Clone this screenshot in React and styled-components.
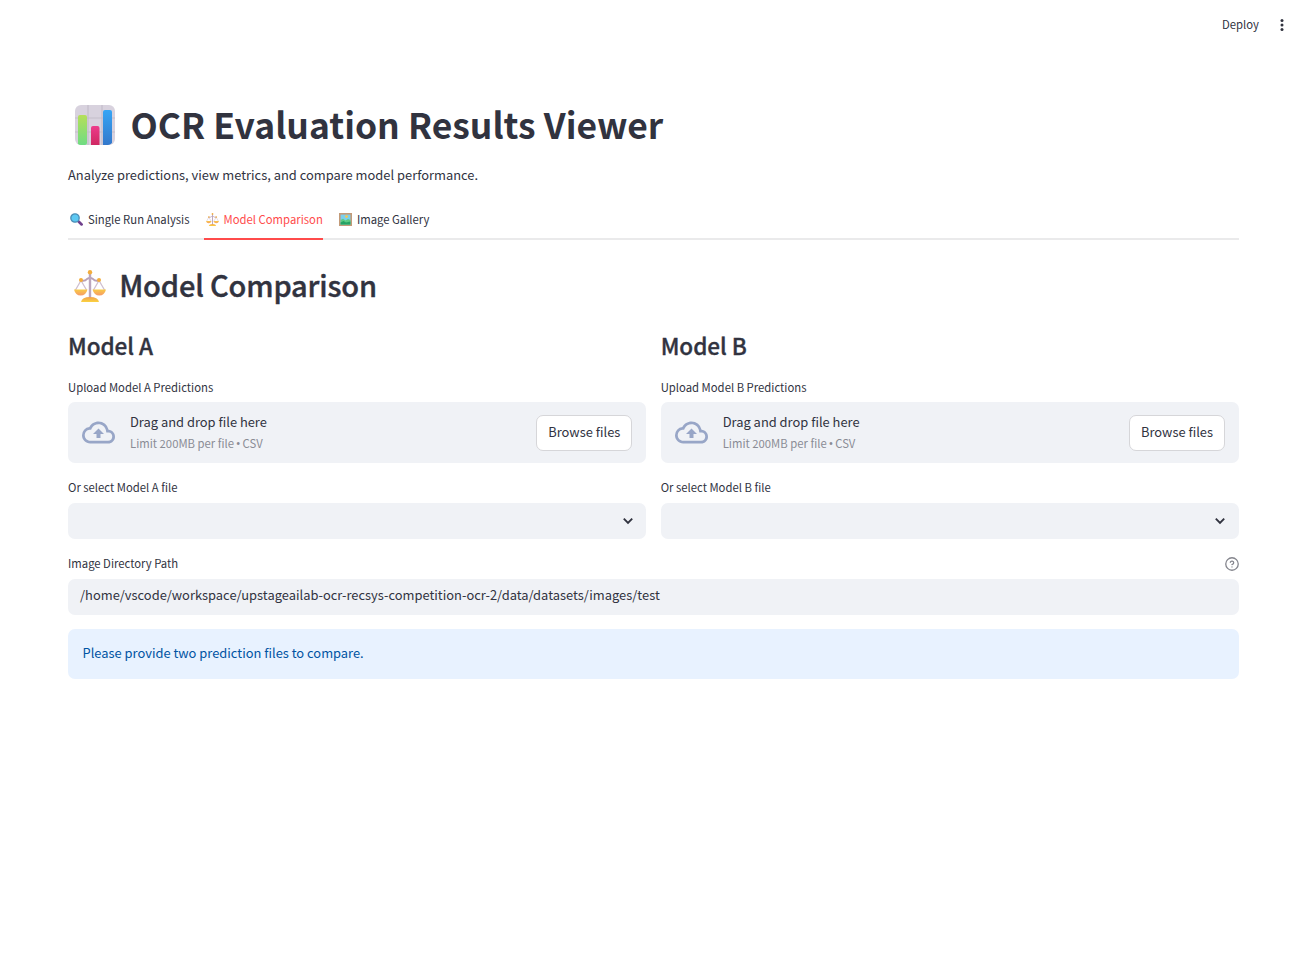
import React from "react";
import styled, { createGlobalStyle } from "styled-components";

const Global = createGlobalStyle`
  * { box-sizing: border-box; }
  body { margin: 0; background: #fff; }
  body, button, input { font-family: "Noto Sans CJK SC", "Noto Sans CJK JP", "Open Sans", sans-serif; color: #31333f; }
`;
const Header = styled.header`
  height: 54px; display: flex; justify-content: flex-end; align-items: center;
  padding: 0 20px 4px 0; gap: 16px;
`;
const PlainButton = styled.button`
  border: 0; background: none; padding: 0 0 ${p => p.$lift || 0}px; display: flex; font-size: 11.3px; line-height: 20px;
`;
const Main = styled.main`width: 1171px; margin: 45px 0 0 68px;`;
const Title = styled.h1`
  margin: 0; height: 52px; display: flex; align-items: center; gap: 15.4px; padding-left: 7px;
  font-size: 35.45px; font-weight: 700; line-height: 52px; white-space: nowrap;
  span { padding-bottom: 2px; letter-spacing: 0.015px; }
`;
const Intro = styled.p`margin: 13px 0 14px; font-size: 12.9px; line-height: 22px;`;
const Tabs = styled.nav`display: flex; gap: 14.6px; height: 40px; border-bottom: 2px solid #eaeaeb;`;
const Tab = styled.button`
  border: 0; border-bottom: 2px solid ${p => (p.$active ? "#ff4b4b" : "transparent")};
  background: none; height: 40px; padding: 0 0 0 2px; display: flex; align-items: center; gap: 4.5px;
  font-size: 11.3px; line-height: 20px; white-space: nowrap;
  && { color: ${p => (p.$active ? "#ff4b4b" : "#31333f")}; }
  svg { margin-top: 1px; }
`;
const Heading = styled.h2`
  margin: 26px 0 24px; height: 40px; padding-left: 6px; display: flex; align-items: center; gap: 13.2px;
  font-size: 29px; line-height: 40px; font-weight: 500; letter-spacing: -0.16px; -webkit-text-stroke: 0.4px #31333f;
  span { padding-bottom: 4px; }
`;
const Columns = styled.div`display: grid; grid-template-columns: 1fr 1fr; gap: 14.4px;`;
const Subheading = styled.h3`
  margin: 0 0 18px; font-size: 22.56px; line-height: 30px; font-weight: 500; letter-spacing: -0.06px;
  -webkit-text-stroke: 0.35px #31333f;
`;
const Label = styled.div`
  height: 20px; margin-bottom: ${p => p.$gap || 5}px; display: flex; justify-content: space-between;
  font-size: 11.3px; line-height: 18px;
  svg { margin-top: 3px; }
`;
const Dropzone = styled.div`
  height: 61px; margin-bottom: 15px; padding: 0 14px; border-radius: 7px; background: #f0f2f6;
  display: flex; align-items: center;
`;
const DropText = styled.div`flex: 1; margin-left: 15px; padding-bottom: 1px; font-size: 12.9px; line-height: 22px;`;
const Hint = styled.div`font-size: 11.3px; line-height: 20px; color: #8a8c95;`;
const Bullet = styled.span`font-family: "Open Sans", sans-serif; font-size: 13px; line-height: 0; margin: 0 -0.7px;`;
const Browse = styled.button`
  height: 36px; width: 96px; padding: 0 0 2px; border: 1px solid #d6d6d9; border-radius: 7px; background: #fff;
  font-size: 12.9px; line-height: 22px;
`;
const Select = styled.div`
  height: 36px; margin-bottom: 15px; padding-right: 11.7px; border-radius: 7px; background: #f0f2f6;
  display: flex; align-items: center; justify-content: flex-end;
`;
const PathInput = styled.div`
  height: 36px; padding: 0 12px; border-radius: 7px; background: #f0f2f6; font-size: 12.9px; line-height: 31px;
`;
const Notice = styled.div`
  height: 50px; margin-top: 14px; padding: 0 14.5px; border-radius: 7px; background: #e8f2ff; color: #0054a3;
  font-size: 12.9px; line-height: 47px;
`;

const ChartIcon = () => (
  <svg width="40" height="40" viewBox="0 0 40 40">
    <defs>
      <linearGradient id="cg" x2="0" y2="1"><stop stopColor="#b5df59" /><stop offset="1" stopColor="#6fdc83" /></linearGradient>
      <linearGradient id="cr" x2="0" y2="1"><stop stopColor="#ed3b8b" /><stop offset="1" stopColor="#cf2862" /></linearGradient>
      <linearGradient id="cb" x2="0" y2="1"><stop stopColor="#36a5f5" /><stop offset="1" stopColor="#3378cb" /></linearGradient>
    </defs>
    <rect width="40" height="40" rx="6" fill="#d8d2de" />
    <path d="M13 0V40M27 0V40M0 13H40M0 27H40" stroke="#c3bdca" strokeWidth="1.200" />
    <path d="M3 40V12q0-2 2-2h5q2 0 2 2V38q0 2-2 2H6q-2 0-3-1z" fill="url(#cg)" />
    <path d="M16 40V23q0-2 2-2h4.500q2 0 2 2V40z" fill="url(#cr)" />
    <path d="M28 40V7q0-2 2-2h5q2 0 2 2V38q-2 2-4 2z" fill="url(#cb)" />
  </svg>
);
const ScaleIcon = ({ size }) => (
  <svg width={size} height={size} viewBox="0 0 32 32" strokeLinecap="round">
    <defs>
      <linearGradient id="sp" x2="0" y2="1"><stop stopColor="#f9cb45" /><stop offset="1" stopColor="#f69b68" /></linearGradient>
      <linearGradient id="sb" x2="0" y2="1"><stop stopColor="#f19f4c" /><stop offset="1" stopColor="#fbd341" /></linearGradient>
    </defs>
    <path d="M7 10.500Q11 11.500 13 9q3-2.200 6 0Q21 11.500 25 10.500" fill="none" stroke="#b9a1b8" strokeWidth="2" />
    <path d="M16 3V27" stroke="#bba6bd" strokeWidth="2.400" />
    <path d="M7 10.500L1.500 20M7 10.500L12.500 20M25 10.500L19.500 20M25 10.500L30.500 20" stroke="#cfbfd0" strokeWidth="1.300" />
    <path d="M0 19.500H13.500Q12 25.500 6.700 25.500T0 19.500zM18.500 19.500H32Q30.500 25.500 25.300 25.500T18.500 19.500z" fill="url(#sp)" />
    <path d="M7 32q1-5 9-5t9 5z" fill="url(#sb)" />
    <circle cx="16" cy="2.200" r="2.200" fill="#f3ad3c" /><circle cx="7" cy="10" r="2" fill="#f3ad3c" /><circle cx="25" cy="10" r="2" fill="#f3ad3c" />
  </svg>
);
const SearchIcon = () => (
  <svg width="13.5" height="13" viewBox="0 0 13.5 13">
    <path d="M8.600 8.600L11.600 11.400" stroke="#70408d" strokeWidth="2.700" strokeLinecap="round" />
    <circle cx="5" cy="5" r="4.200" fill="#5cc8f2" stroke="#4b8db5" strokeWidth="1.300" />
  </svg>
);
const PictureIcon = () => (
  <svg width="13" height="13" viewBox="0 0 13 13">
    <rect x=".8" y=".8" width="11.400" height="11.400" fill="#7bd0ee" stroke="#c39a78" strokeWidth="1.600" />
    <path d="M1.600 7L4 5.800 6.500 7.500 9 6 11.400 7V11.400H1.600z" fill="#5ccb83" />
    <path d="M1.600 9.500L4.500 8 7 9.500 11.400 8.500V11.400H1.600z" fill="#25a264" />
    <circle cx="7.500" cy="3.600" r="1.400" fill="#f5c84f" />
  </svg>
);
const CloudIcon = () => (
  <svg width="33" height="33" viewBox="0 0 24 24" fill="#98a6c7">
    <path d="M19.350 10.040A7.490 7.490 0 0 0 12 4C9.110 4 6.600 5.640 5.350 8.040A5.994 5.994 0 0 0 0 14c0 3.310 2.690 6 6 6h13c2.760 0 5-2.240 5-5 0-2.640-2.050-4.780-4.650-4.960zM19 18H6c-2.210 0-4-1.790-4-4 0-2.050 1.530-3.760 3.560-3.970l1.070-.11.5-.95A5.469 5.469 0 0 1 12 6c2.620 0 4.880 1.860 5.390 4.430l.3 1.500 1.530.11A2.980 2.980 0 0 1 22 15c0 1.650-1.350 3-3 3zM8 13h2.550v3h2.900v-3H16l-4-4z" />
  </svg>
);
const ChevronIcon = () => (
  <svg width="14" height="14" viewBox="0 0 14 14" fill="none" stroke="#31333f" strokeWidth="1.900">
    <path d="M2.800 4.700L7 8.900 11.200 4.700" />
  </svg>
);
const HelpIcon = () => (
  <svg width="14" height="14" viewBox="0 0 24 24" fill="none" stroke="#83848c" strokeWidth="2.200" strokeLinecap="round" strokeLinejoin="round">
    <circle cx="12" cy="12" r="10.700" />
    <path d="M9.090 9a3 3 0 0 1 5.830 1c0 2-3 3-3 3M12 17h.01" />
  </svg>
);
const MenuIcon = () => (
  <svg width="14" height="20" viewBox="0 0 14 20" fill="#31333f">
    <circle cx="7" cy="5.500" r="1.500" /><circle cx="7" cy="10" r="1.500" /><circle cx="7" cy="14.500" r="1.500" />
  </svg>
);

const ModelPanel = ({ name }) => (
  <section>
    <Subheading>Model {name}</Subheading>
    <Label $gap={4}>Upload Model {name} Predictions</Label>
    <Dropzone>
      <CloudIcon />
      <DropText>Drag and drop file here<Hint>Limit 200MB per file <Bullet>•</Bullet> CSV</Hint></DropText>
      <Browse>Browse files</Browse>
    </Dropzone>
    <Label>Or select Model {name} file</Label>
    <Select><ChevronIcon /></Select>
  </section>
);

export default function App() {
  return (
    <>
      <Global />
      <Header>
        <PlainButton $lift={2}>Deploy</PlainButton>
        <PlainButton aria-label="Menu"><MenuIcon /></PlainButton>
      </Header>
      <Main>
        <Title><ChartIcon /><span>OCR Evaluation Results Viewer</span></Title>
        <Intro>Analyze predictions, view metrics, and compare model performance.</Intro>
        <Tabs>
          <Tab><SearchIcon /><span>Single Run Analysis</span></Tab>
          <Tab $active><ScaleIcon size={13} /><span>Model Comparison</span></Tab>
          <Tab><PictureIcon /><span>Image Gallery</span></Tab>
        </Tabs>
        <Heading><ScaleIcon size={32} /><span>Model Comparison</span></Heading>
        <Columns><ModelPanel name="A" /><ModelPanel name="B" /></Columns>
        <Label>Image Directory Path<HelpIcon /></Label>
        <PathInput>/home/vscode/workspace/upstageailab-ocr-recsys-competition-ocr-2/data/datasets/images/test</PathInput>
        <Notice>Please provide two prediction files to compare.</Notice>
      </Main>
    </>
  );
}
